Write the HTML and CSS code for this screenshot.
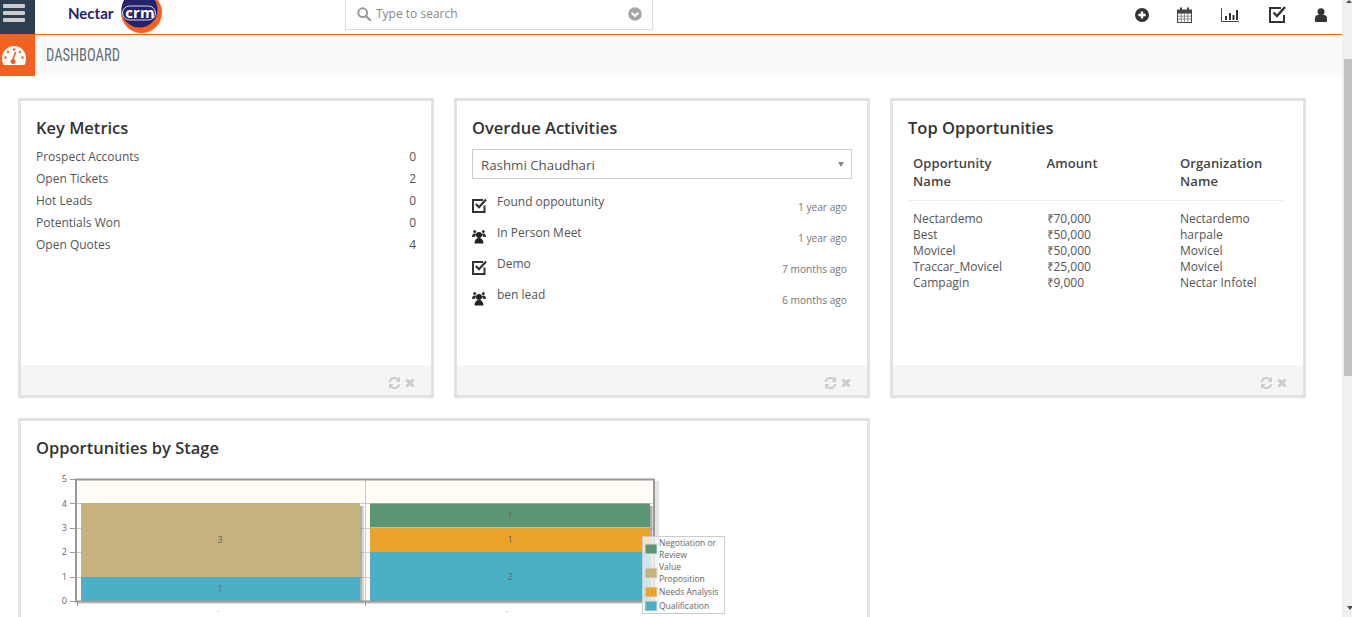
FILE: index.html
```html
<!DOCTYPE html>
<html lang="en">
<head>
  <meta charset="UTF-8" />
  <title>Dashboard</title>
  <link rel="stylesheet" href="styles.css">
</head>
<body>
  <div class="page">
    <div class="main">
      <header class="topbar">
        <button class="menu-btn" aria-label="Menu"><span></span><span></span><span></span></button>
        <div class="logo">
          <span class="logo-word">Nectar</span>
          <svg class="logo-mark" width="44" height="34" viewBox="0 0 44 34">
            <circle cx="23.5" cy="12.5" r="20.500" fill="#f26122"/>
            <circle cx="21.5" cy="9.5" r="18" fill="#25226b"/>
            <rect x="4.5" y="6" width="33" height="14" rx="7" fill="none" stroke="#d8d8e8" stroke-width="1"/>
            <text x="22" y="17.500" text-anchor="middle" class="logo-crm">crm</text>
            <circle cx="12.500" cy="13" r="1" fill="#f26122"/>
          </svg>
        </div>
        <div class="search">
          <svg class="search-icon" width="14" height="14" viewBox="0 0 14 14">
            <circle cx="5.7" cy="5.7" r="4.4" fill="none" stroke="#999" stroke-width="2"/>
            <path d="M9 9l4 4" stroke="#999" stroke-width="2.4" stroke-linecap="round"/>
          </svg>
          <span class="search-text">Type to search</span>
          <svg class="search-caret" width="14" height="14" viewBox="0 0 14 14">
            <circle cx="7" cy="7" r="6.8" fill="#a5a5a5"/>
            <path d="M3.600 5.600L7 9l3.400-3.400" fill="none" stroke="#fff" stroke-width="2"/>
          </svg>
        </div>
        <nav class="top-icons">
          <svg class="icon-add" width="14" height="14" viewBox="0 0 14 14"><circle cx="7" cy="7" r="7" fill="#333"/><path d="M7 3.400v7.200M3.400 7h7.200" stroke="#fff" stroke-width="2.400"/></svg>
          <svg width="15" height="16" viewBox="0 0 15 16"><rect x=".5" y="3" width="14" height="12.500" fill="#fff" stroke="#444"/><path d="M1 6.500h13M1 9.200h13M1 12h13M4.200 6v9M7.500 6v9M10.800 6v9" stroke="#777" stroke-width=".8"/><path d="M.5 3h14v3H.5z" fill="#444"/><path d="M4 .500v3.500M11 .500v3.500" stroke="#444" stroke-width="2"/></svg>
          <svg width="18" height="14" viewBox="0 0 18 14"><path d="M.5 0v13.500H18" fill="none" stroke="#444"/><path d="M4 8h2v4H4zM8 5h2v7H8zM11.500 7h2v5h-2zM15 2h2v10h-2z" fill="#333"/></svg>
          <svg width="17" height="17" viewBox="0 0 17 17"><path d="M15 9v7H1V2h11" fill="none" stroke="#333" stroke-width="2"/><path d="M4.500 6.500l3.500 3.500 8-9" fill="none" stroke="#333" stroke-width="2.400"/></svg>
          <svg width="12" height="14" viewBox="0 0 12 14"><circle cx="6" cy="3.800" r="3.500" fill="#333"/><path d="M0 13v-3c0-2 1.500-3 3-3h6c1.500 0 3 1 3 3v3c0 .6-.4 1-1 1H1c-.6 0-1-.4-1-1z" fill="#333"/></svg>
        </nav>
      </header>

      <div class="titlebar">
        <div class="title-icon">
          <svg width="26" height="22" viewBox="0 0 26 22">
            <path d="M13 1C6 1 1 6.500 1 13.500c0 2.500.6 4.500 1.700 6.500h20.600c1.100-2 1.700-4 1.700-6.500C25 6.500 20 1 13 1z" fill="#fff"/>
            <path d="M14.500 7l-2.800 8.500" stroke="#f26122" stroke-width="1.600"/>
            <circle cx="12" cy="16.500" r="2.500" fill="#f26122"/>
            <circle cx="13" cy="4.500" r="1.200" fill="#f26122"/><circle cx="7" cy="7" r="1.200" fill="#f26122"/><circle cx="19" cy="7" r="1.200" fill="#f26122"/><circle cx="4.500" cy="12.500" r="1.200" fill="#f26122"/><circle cx="21.500" cy="12.500" r="1.200" fill="#f26122"/>
          </svg>
        </div>
        <h1>DASHBOARD</h1>
      </div>

      <div class="grid">
        <section class="card">
          <div class="card-body">
            <h2>Key Metrics</h2>
            <ul class="metrics">
              <li><span>Prospect Accounts</span><span>0</span></li>
              <li><span>Open Tickets</span><span>2</span></li>
              <li><span>Hot Leads</span><span>0</span></li>
              <li><span>Potentials Won</span><span>0</span></li>
              <li><span>Open Quotes</span><span>4</span></li>
            </ul>
          </div>
          <div class="card-foot">
            <svg width="13" height="12" viewBox="0 0 13 12"><path d="M1.500 5A5 5 0 0 1 10 2.500M11.500 7A5 5 0 0 1 3 9.500" fill="none" stroke="#ccc" stroke-width="2"/><path d="M12 0v5H7.500zM1 12V7h4.500z" fill="#ccc"/></svg>
            <svg width="12" height="12" viewBox="0 0 12 12"><path d="M2.500 2.500l7 7M9.500 2.500l-7 7" stroke="#ccc" stroke-width="3"/></svg>
          </div>
        </section>

        <section class="card">
          <div class="card-body">
            <h2>Overdue Activities</h2>
            <div class="select"><span>Rashmi Chaudhari</span><i class="select-arrow"></i></div>
            <ul class="activities">
              <li>
                <svg class="ico-task" width="15" height="15" viewBox="0 0 15 15"><path d="M12.500 7.500v6.400H1V2h10" fill="none" stroke="#333" stroke-width="2"/><path d="M3.800 6l3.200 3.200L14 1.500" fill="none" stroke="#333" stroke-width="2.200"/></svg>
                <span class="act-name">Found oppoutunity</span><span class="act-time">1 year ago</span>
              </li>
              <li>
                <svg class="ico-meet" width="14" height="15" viewBox="0 0 14 15"><circle cx="7" cy="6" r="3" fill="#222"/><path d="M2.500 14.500c0-3.500 1.800-5.500 4.500-5.500s4.500 2 4.500 5.500z" fill="#222"/><circle cx="2.700" cy="2.500" r="1.500" fill="#333"/><circle cx="11.300" cy="2.500" r="1.500" fill="#333"/><path d="M0 8c0-2.500 1-3.500 2.500-3.500S4 5.200 4 6L2.500 8zM14 8c0-2.500-1-3.500-2.500-3.500S10 5.200 10 6l1.500 2z" fill="#333"/></svg>
                <span class="act-name">In Person Meet</span><span class="act-time">1 year ago</span>
              </li>
              <li>
                <svg class="ico-task" width="15" height="15" viewBox="0 0 15 15"><path d="M12.500 7.500v6.400H1V2h10" fill="none" stroke="#333" stroke-width="2"/><path d="M3.800 6l3.200 3.200L14 1.500" fill="none" stroke="#333" stroke-width="2.200"/></svg>
                <span class="act-name">Demo</span><span class="act-time">7 months ago</span>
              </li>
              <li>
                <svg class="ico-meet" width="14" height="15" viewBox="0 0 14 15"><circle cx="7" cy="6" r="3" fill="#222"/><path d="M2.500 14.500c0-3.500 1.800-5.500 4.500-5.500s4.500 2 4.500 5.500z" fill="#222"/><circle cx="2.700" cy="2.500" r="1.500" fill="#333"/><circle cx="11.300" cy="2.500" r="1.500" fill="#333"/><path d="M0 8c0-2.500 1-3.500 2.500-3.500S4 5.200 4 6L2.500 8zM14 8c0-2.500-1-3.500-2.500-3.500S10 5.200 10 6l1.500 2z" fill="#333"/></svg>
                <span class="act-name">ben lead</span><span class="act-time">6 months ago</span>
              </li>
            </ul>
          </div>
          <div class="card-foot">
            <svg width="13" height="12" viewBox="0 0 13 12"><path d="M1.500 5A5 5 0 0 1 10 2.500M11.500 7A5 5 0 0 1 3 9.500" fill="none" stroke="#ccc" stroke-width="2"/><path d="M12 0v5H7.500zM1 12V7h4.500z" fill="#ccc"/></svg>
            <svg width="12" height="12" viewBox="0 0 12 12"><path d="M2.500 2.500l7 7M9.500 2.500l-7 7" stroke="#ccc" stroke-width="3"/></svg>
          </div>
        </section>

        <section class="card">
          <div class="card-body">
            <h2>Top Opportunities</h2>
            <table class="opps">
              <thead>
                <tr><th>Opportunity<br>Name</th><th>Amount</th><th>Organization<br>Name</th></tr>
              </thead>
              <tbody>
                <tr><td>Nectardemo</td><td>₹70,000</td><td>Nectardemo</td></tr>
                <tr><td>Best</td><td>₹50,000</td><td>harpale</td></tr>
                <tr><td>Movicel</td><td>₹50,000</td><td>Movicel</td></tr>
                <tr><td>Traccar_Movicel</td><td>₹25,000</td><td>Movicel</td></tr>
                <tr><td>Campagin</td><td>₹9,000</td><td>Nectar Infotel</td></tr>
              </tbody>
            </table>
          </div>
          <div class="card-foot">
            <svg width="13" height="12" viewBox="0 0 13 12"><path d="M1.500 5A5 5 0 0 1 10 2.500M11.500 7A5 5 0 0 1 3 9.500" fill="none" stroke="#ccc" stroke-width="2"/><path d="M12 0v5H7.500zM1 12V7h4.500z" fill="#ccc"/></svg>
            <svg width="12" height="12" viewBox="0 0 12 12"><path d="M2.500 2.500l7 7M9.500 2.500l-7 7" stroke="#ccc" stroke-width="3"/></svg>
          </div>
        </section>

        <section class="card card-wide">
          <div class="card-body">
            <h2>Opportunities by Stage</h2>
            <svg class="chart" width="720" height="147" viewBox="0 0 720 147">
              <!-- origin is card x 21, y 470 -->
              <rect x="55" y="9" width="578" height="122" fill="#fffdf6"/>
              <g stroke="#ccc"><path d="M56 33.500h578M56 58.500h578M56 82.500h578M56 107.500h578M344.500 9v122"/></g>
              <g fill="#999">
                <rect x="339" y="36" width="2" height="96" opacity=".8"/>
                <rect x="341" y="36" width="2" height="96" opacity=".4"/>
                <rect x="629" y="36" width="2" height="96" opacity=".8"/>
                <rect x="631" y="36" width="2" height="96" opacity=".4"/>
              </g>
              <rect x="60" y="33" width="279" height="74" fill="#c5b27f"/>
              <rect x="60" y="107" width="279" height="24.500" fill="#4bb0c6"/>
              <rect x="349" y="33.500" width="280" height="24" fill="#5a9674"/>
              <rect x="349" y="58" width="280" height="24" fill="#e9a22a"/>
              <rect x="349" y="82" width="280" height="49.500" fill="#4bb0c6"/>
              <rect x="56" y="132" width="578" height="2" fill="#ddd"/>
              <path d="M634 11h4v123h-4z" fill="#e4e4e4"/>
              <path d="M55 9.500h578v122H55z" fill="none" stroke="#999" stroke-width="2"/>
              <g stroke="#999"><path d="M49 9.500h6M49 33.500h6M49 58.500h6M49 82.500h6M49 107.500h6M49 131.500h6M56.500 132v4M344.500 132v4"/></g>
              <g class="tick" text-anchor="end">
                <text x="46" y="12">5</text><text x="46" y="37">4</text><text x="46" y="61">3</text><text x="46" y="85">2</text><text x="46" y="110">1</text><text x="46" y="134">0</text>
              </g>
              <g class="tick" text-anchor="middle">
                <text x="199" y="73">3</text><text x="199" y="122">1</text><text x="489" y="49">1</text><text x="489" y="73">1</text><text x="489" y="110">2</text>
              </g>
              <g class="tick-x" text-anchor="middle"><text x="197" y="146">´</text><text x="486" y="146">´</text></g>
              <rect x="621.500" y="66.500" width="82" height="77" fill="#fff" fill-opacity=".7" stroke="#ccc"/>
              <g stroke="#ddd">
                <rect x="624" y="74" width="12" height="10" fill="#5a9674"/>
                <rect x="624" y="98" width="12" height="10" fill="#c5b27f"/>
                <rect x="624" y="117" width="12" height="10" fill="#e9a22a"/>
                <rect x="624" y="131" width="12" height="10" fill="#4bb0c6"/>
              </g>
              <g class="legend">
                <text x="638" y="76">Negotiation or</text><text x="638" y="88">Review</text><text x="638" y="100">Value</text><text x="638" y="112">Proposition</text><text x="638" y="125">Needs Analysis</text><text x="638" y="139">Qualification</text>
              </g>
            </svg>
          </div>
        </section>
      </div>
    </div>
    <div class="scrollbar">
      <i class="arrow-up"></i>
      <div class="scroll-thumb"></div>
      <i class="arrow-down"></i>
    </div>
  </div>
</body>
</html>
```
FILE: styles.css
```css
* {
  box-sizing: border-box;
}
html, body {
  margin: 0;
  height: 617px;
  overflow: hidden;
}
body {
  font-family: "Open Sans", Arial, sans-serif;
  font-size: 12px;
  color: #555;
  background-color: #fff;
}
ul {
  list-style: none;
  margin: 0;
  padding: 0;
}
h1, h2 {
  margin: 0;
  font-weight: 400;
}
svg {
  display: block;
  flex: none;
}
.page {
  display: flex;
  height: 617px;
}
.main {
  flex: 1;
  min-width: 0;
}

/* scrollbar */
.scrollbar {
  display: flex;
  flex-direction: column;
  width: 10px;
  padding-left: 2px;
  background-color: #f0f0f0;
}
.arrow-up {
  width: 0;
  height: 0;
  margin: 0 0 56px 2px;
  border-left: 3px solid transparent;
  border-right: 3px solid transparent;
  border-bottom: 3px solid #505050;
}
.arrow-down {
  width: 0;
  height: 0;
  margin: auto 0 7px 3px;
  border-left: 3px solid transparent;
  border-right: 3px solid transparent;
  border-top: 4px solid #505050;
}
.scroll-thumb {
  height: 317px;
  background-color: #c1c1c1;
}

/* top bar */
.topbar {
  display: flex;
  align-items: stretch;
  height: 35px;
  border-bottom: 1px solid #f26122;
}
.menu-btn {
  display: flex;
  flex-direction: column;
  gap: 3px;
  width: 35px;
  padding: 4px 3px 0;
  border: none;
  background-color: #2c3e50;
}
.menu-btn span {
  display: block;
  width: 22px;
  height: 4px;
  border-radius: 1px;
  background-color: #ccc;
}
.logo {
  display: flex;
  width: 310px;
  padding-left: 33px;
}
.logo-word {
  margin-top: 4px;
  font-family: Lato, Arial, sans-serif;
  font-size: 15px;
  line-height: 18px;
  font-weight: 700;
  color: #25226b;
}
.logo-mark {
  margin-left: 5px;
}
.logo-crm {
  font-family: "Open Sans", Arial, sans-serif;
  font-size: 15px;
  font-weight: 700;
  fill: #fff;
}
.search {
  display: flex;
  align-items: center;
  width: 308px;
  height: 30px;
  padding: 0 10px 2px 11px;
  border: 1px solid #ddd;
  border-top: none;
  color: #888;
}
.search-text {
  flex: 1;
  margin-left: 5px;
  font-size: 12px;
}
.top-icons {
  display: flex;
  align-items: center;
  gap: 29.500px;
  height: 29px;
  margin-left: auto;
  padding-right: 15px;
}
.icon-add {
  margin-right: -2px;
}

/* page title */
.titlebar {
  display: flex;
  height: 41px;
  background-color: #fafafa;
}
.title-icon {
  display: flex;
  align-items: center;
  width: 35px;
  padding: 1px 0 0 1px;
  background-color: #f26122;
}
.titlebar h1 {
  margin-left: 11px;
  font-family: "Liberation Sans Narrow", "Roboto Condensed", Arial, sans-serif;
  font-size: 17.500px;
  line-height: 40px;
  color: #63707e;
  transform: scaleX(.83);
  transform-origin: left center;
}

/* cards */
.grid {
  display: grid;
  grid-template-columns: repeat(3, 416px);
  grid-auto-rows: 300px;
  gap: 20px;
  padding: 22px 18px 0;
}
.card {
  display: flex;
  flex-direction: column;
  border: 3px solid #e2e2e2;
  background-color: #fff;
}
.card-wide {
  grid-column: span 2;
}
.card-body {
  flex: 1;
  min-height: 0;
  padding: 15px 15px 0;
}
.card h2 {
  font-size: 16.500px;
  line-height: 24px;
  font-weight: 600;
  color: #333;
}
.card-foot {
  display: flex;
  align-items: center;
  justify-content: flex-end;
  gap: 3px;
  height: 30px;
  padding: 6px 15px 0 0;
  background-color: #f5f5f5;
}

/* key metrics */
.metrics {
  margin-top: 6px;
}
.metrics li {
  display: flex;
  justify-content: space-between;
  line-height: 22px;
}

/* overdue */
.select {
  display: flex;
  align-items: center;
  justify-content: space-between;
  height: 30px;
  margin-top: 9px;
  padding: 1px 8px 0;
  border: 1px solid #ccc;
  font-size: 13.300px;
}
.select-arrow {
  width: 0;
  height: 0;
  margin-right: -1px;
  border-left: 3px solid transparent;
  border-right: 3px solid transparent;
  border-top: 5px solid #888;
}
.activities {
  margin-top: 13px;
}
.activities li {
  display: flex;
  height: 31px;
  line-height: 20px;
}
.ico-task {
  margin-top: 6px;
}
.ico-meet {
  margin-top: 6px;
}
.act-name {
  flex: 1;
  margin-left: 10px;
}
.ico-meet + .act-name {
  margin-left: 11px;
}
.act-time {
  padding: 5px 5px 0 0;
  font-size: 10.200px;
  color: #777;
}

/* top opportunities */
.opps {
  width: 375px;
  margin: 9px 0 0;
  border-collapse: collapse;
  table-layout: fixed;
}
.opps th {
  width: 133.500px;
  padding: 5px 5px 10px;
  border-bottom: 1px solid #eee;
  font-weight: 600;
  font-size: 13px;
  line-height: 18px;
  letter-spacing: .1px;
  text-align: left;
  vertical-align: top;
  color: #444;
}
.opps th:last-child {
  width: auto;
}
.opps td {
  padding: 0 5px;
  line-height: 16px;
  white-space: nowrap;
}
.opps tbody tr:first-child td {
  padding-top: 10px;
}

/* chart */
.chart {
  margin: 10px 0 0 -15px;
}
.tick {
  font-size: 9px;
  fill: #666;
}
.tick-x {
  font-size: 7px;
  fill: #666;
}
.legend {
  font-size: 8.500px;
  fill: #666;
}
```
